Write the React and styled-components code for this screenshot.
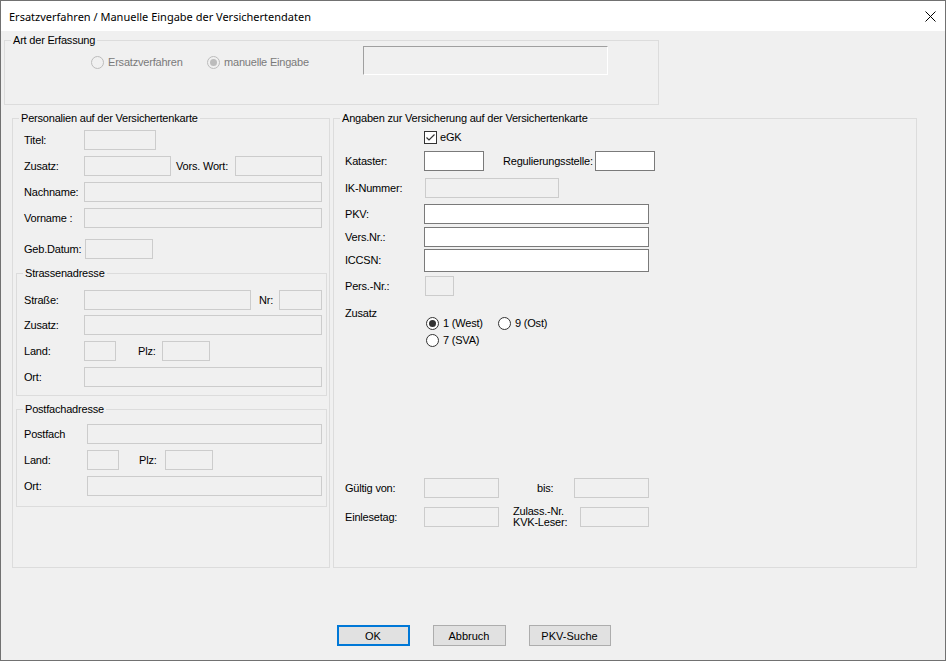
import React from "react";
import styled, { createGlobalStyle } from "styled-components";

const GlobalStyle = createGlobalStyle`
  html, body { margin: 0; padding: 0; background: #f0f0f0; }
  * { box-sizing: border-box; }
`;

const Window = styled.div`
  width: 946px;
  height: 661px;
  border: 1px solid #717171;
  background: #f0f0f0;
  display: flex;
  flex-direction: column;
  font-family: "Liberation Sans", Arial, sans-serif;
  font-size: 11px;
  letter-spacing: -0.2px;
  color: #000;
  overflow: hidden;
`;

const TitleBar = styled.div`
  height: 30px;
  flex-shrink: 0;
  background: #fff;
  display: flex;
  align-items: center;
  justify-content: space-between;
  padding: 0 9px 0 8px;
  font-family: "Noto Sans", "Liberation Sans", sans-serif;
  font-size: 11px;
  letter-spacing: 0;
`;

const CloseButton = styled.div`
  width: 12px;
  height: 12px;
  display: flex;
  align-items: center;
  justify-content: center;
`;

const Body = styled.div`
  display: flex;
  flex-direction: column;
`;

const Group = styled.div`
  position: relative;
  border: 1px solid #dcdcdc;
  width: ${(p) => p.$w}px;
  height: ${(p) => (p.$h ? `${p.$h}px` : "auto")};
  margin-top: ${(p) => p.$mt || 0}px;
  margin-left: ${(p) => p.$ml || 0}px;
  flex-shrink: 0;
  padding-bottom: ${(p) => p.$pb || 0}px;
`;

const Legend = styled.span`
  position: absolute;
  top: -7px;
  left: 6px;
  padding: 0 2px;
  background: #f0f0f0;
  line-height: 13px;
  white-space: nowrap;
`;

const Columns = styled.div`
  display: flex;
  gap: 3px;
  margin-top: 13px;
  margin-left: 11px;
`;

const ArtRow = styled.div`
  display: flex;
  align-items: flex-start;
  padding-left: 86px;
`;

const Row = styled.div`
  display: flex;
  align-items: ${(p) => p.$align || "center"};
  height: ${(p) => (p.$h === "auto" ? "auto" : `${p.$h || 20}px`)};
  margin-top: ${(p) => p.$mt || 0}px;
  padding-left: ${(p) => p.$pl || 0}px;
`;

const Label = styled.span`
  width: ${(p) => p.$w}px;
  flex-shrink: 0;
  margin-left: ${(p) => p.$ml || 0}px;
  white-space: ${(p) => (p.$wrap ? "normal" : "nowrap")};
  line-height: ${(p) => p.$lh || 13}px;
`;

const Field = styled.input`
  width: ${(p) => p.$w}px;
  height: ${(p) => p.$h || 20}px;
  margin: 0 0 0 ${(p) => p.$ml || 0}px;
  padding: 0 2px;
  flex-shrink: 0;
  border: 1px solid ${(p) => (p.$on ? "#7a7a7a" : "#cccccc")};
  background: ${(p) => (p.$on ? "#ffffff" : "#f0f0f0")};
  font: inherit;
  outline: none;
  border-radius: 0;
`;

const Sunken = styled.div`
  width: 245px;
  height: 29px;
  margin-top: 5px;
  border-top: 1px solid #a0a0a0;
  border-left: 1px solid #a0a0a0;
  border-right: 1px solid #ffffff;
  border-bottom: 1px solid #ffffff;
`;

const RadioItem = styled.label`
  display: inline-flex;
  align-items: center;
  gap: 4px;
  width: ${(p) => (p.$w ? `${p.$w}px` : "auto")};
  margin-top: ${(p) => p.$mt || 0}px;
  height: 13px;
  line-height: 13px;
  color: ${(p) => (p.$disabled ? "#7a7a7a" : "#000")};
  white-space: nowrap;
  flex-shrink: 0;
`;

const RadioCircle = styled.span`
  width: 13px;
  height: 13px;
  border-radius: 50%;
  border: 1px solid ${(p) => (p.$disabled ? "#bcbcbc" : "#333333")};
  background: ${(p) => (p.$disabled ? "#f0f0f0" : "#ffffff")};
  display: flex;
  align-items: center;
  justify-content: center;
  flex-shrink: 0;
  &::after {
    content: "";
    display: ${(p) => (p.$checked ? "block" : "none")};
    width: 7px;
    height: 7px;
    border-radius: 50%;
    background: ${(p) => (p.$disabled ? "#bcbcbc" : "#333333")};
  }
`;

const RadioGrid = styled.div`
  display: grid;
  grid-template-columns: 72px auto;
  row-gap: 4px;
  margin-top: 10px;
`;

const CheckRow = styled.label`
  display: flex;
  align-items: center;
  gap: 3px;
  height: 13px;
  margin-top: 12px;
  padding-left: 90px;
  line-height: 13px;
`;

const CheckBox = styled.span`
  width: 13px;
  height: 13px;
  border: 1px solid #333333;
  background: #fff;
  display: flex;
  align-items: center;
  justify-content: center;
`;

const ButtonRow = styled.div`
  display: flex;
  justify-content: center;
  gap: 23px;
  margin-top: 57px;
  padding-left: 1px;
`;

const Button = styled.button`
  width: ${(p) => p.$w}px;
  height: 21px;
  padding: 0;
  background: #e1e1e1;
  border: ${(p) => (p.$default ? "2px solid #0078d7" : "1px solid #adadad")};
  font: inherit;
  color: #000;
  border-radius: 0;
`;

const Radio = ({ label, checked, disabled, w, mt }) => (
  <RadioItem $w={w} $mt={mt} $disabled={disabled}>
    <RadioCircle $checked={checked} $disabled={disabled} />
    {label}
  </RadioItem>
);

export default function App() {
  return (
    <>
      <GlobalStyle />
      <Window>
        <TitleBar>
          <span>Ersatzverfahren / Manuelle Eingabe der Versichertendaten</span>
          <CloseButton>
            <svg width="11" height="11" viewBox="0 0 11 11">
              <path d="M0.5 0.5 L10.5 10.5 M10.5 0.5 L0.5 10.5" stroke="#000" strokeWidth="1" fill="none" />
            </svg>
          </CloseButton>
        </TitleBar>
        <Body>
          <Group $w={655} $h={65} $mt={9} $ml={3}>
            <Legend>Art der Erfassung</Legend>
            <ArtRow>
              <Radio label="Ersatzverfahren" disabled w={116} mt={15} />
              <Radio label="manuelle Eingabe" disabled checked w={156} mt={15} />
              <Sunken />
            </ArtRow>
          </Group>

          <Columns>
            <Group $w={318} $h={450}>
              <Legend>Personalien auf der Versichertenkarte</Legend>
              <Row $mt={11} $pl={11}>
                <Label $w={60}>Titel:</Label>
                <Field $w={72} disabled />
              </Row>
              <Row $mt={6} $pl={11}>
                <Label $w={60}>Zusatz:</Label>
                <Field $w={87} disabled />
                <Label $w={59} $ml={5}>Vors. Wort:</Label>
                <Field $w={87} disabled />
              </Row>
              <Row $mt={6} $pl={11}>
                <Label $w={60}>Nachname:</Label>
                <Field $w={238} disabled />
              </Row>
              <Row $mt={6} $pl={11}>
                <Label $w={60}>Vorname :</Label>
                <Field $w={238} disabled />
              </Row>
              <Row $mt={11} $pl={11}>
                <Label $w={61}>Geb.Datum:</Label>
                <Field $w={68} disabled />
              </Row>

              <Group $w={311} $mt={14} $ml={3} $pb={8}>
                <Legend>Strassenadresse</Legend>
                <Row $mt={16} $pl={7}>
                  <Label $w={60}>Straße:</Label>
                  <Field $w={167} disabled />
                  <Label $w={20} $ml={8}>Nr:</Label>
                  <Field $w={43} disabled />
                </Row>
                <Row $mt={5} $pl={7}>
                  <Label $w={60}>Zusatz:</Label>
                  <Field $w={238} disabled />
                </Row>
                <Row $mt={6} $pl={7}>
                  <Label $w={60}>Land:</Label>
                  <Field $w={32} disabled />
                  <Label $w={24} $ml={22}>Plz:</Label>
                  <Field $w={48} disabled />
                </Row>
                <Row $mt={6} $pl={7}>
                  <Label $w={60}>Ort:</Label>
                  <Field $w={238} disabled />
                </Row>
              </Group>

              <Group $w={311} $mt={13} $ml={3} $pb={10}>
                <Legend>Postfachadresse</Legend>
                <Row $mt={14} $pl={7}>
                  <Label $w={63}>Postfach</Label>
                  <Field $w={235} disabled />
                </Row>
                <Row $mt={6} $pl={7}>
                  <Label $w={63}>Land:</Label>
                  <Field $w={32} disabled />
                  <Label $w={26} $ml={20}>Plz:</Label>
                  <Field $w={48} disabled />
                </Row>
                <Row $mt={6} $pl={7}>
                  <Label $w={63}>Ort:</Label>
                  <Field $w={235} disabled />
                </Row>
              </Group>
            </Group>

            <Group $w={584} $h={450}>
              <Legend>Angaben zur Versicherung auf der Versichertenkarte</Legend>
              <CheckRow>
                <CheckBox>
                  <svg width="11" height="11" viewBox="0 0 11 11">
                    <path d="M1.5 5.5 L4 8 L9.5 2.5" stroke="#333" strokeWidth="1.2" fill="none" />
                  </svg>
                </CheckBox>
                eGK
              </CheckRow>
              <Row $mt={7} $pl={11}>
                <Label $w={79}>Kataster:</Label>
                <Field $w={60} $on />
                <Label $w={92} $ml={19}>Regulierungsstelle:</Label>
                <Field $w={60} $on />
              </Row>
              <Row $mt={7} $pl={11}>
                <Label $w={80}>IK-Nummer:</Label>
                <Field $w={134} disabled />
              </Row>
              <Row $mt={6} $pl={11}>
                <Label $w={79}>PKV:</Label>
                <Field $w={225} $on />
              </Row>
              <Row $mt={3} $pl={11}>
                <Label $w={79}>Vers.Nr.:</Label>
                <Field $w={225} $on />
              </Row>
              <Row $mt={2} $pl={11} $h={23}>
                <Label $w={79}>ICCSN:</Label>
                <Field $w={225} $h={23} $on />
              </Row>
              <Row $mt={4} $pl={11}>
                <Label $w={80}>Pers.-Nr.:</Label>
                <Field $w={29} disabled />
              </Row>
              <Row $mt={11} $pl={11} $h="auto" $align="flex-start">
                <Label $w={81}>Zusatz</Label>
                <RadioGrid>
                  <Radio label="1 (West)" checked />
                  <Radio label="9 (Ost)" />
                  <Radio label="7 (SVA)" />
                </RadioGrid>
              </Row>
              <Row $mt={131} $pl={11}>
                <Label $w={79}>Gültig von:</Label>
                <Field $w={75} disabled />
                <Label $w={37} $ml={38}>bis:</Label>
                <Field $w={75} disabled />
              </Row>
              <Row $mt={8} $pl={11} $h={22}>
                <Label $w={79}>Einlesetag:</Label>
                <Field $w={75} disabled />
                <Label $w={67} $ml={14} $lh={11} $wrap>
                  Zulass.-Nr.
                  <br />
                  KVK-Leser:
                </Label>
                <Field $w={69} disabled />
              </Row>
            </Group>
          </Columns>

          <ButtonRow>
            <Button $w={73} $default>OK</Button>
            <Button $w={73}>Abbruch</Button>
            <Button $w={82}>PKV-Suche</Button>
          </ButtonRow>
        </Body>
      </Window>
    </>
  );
}
